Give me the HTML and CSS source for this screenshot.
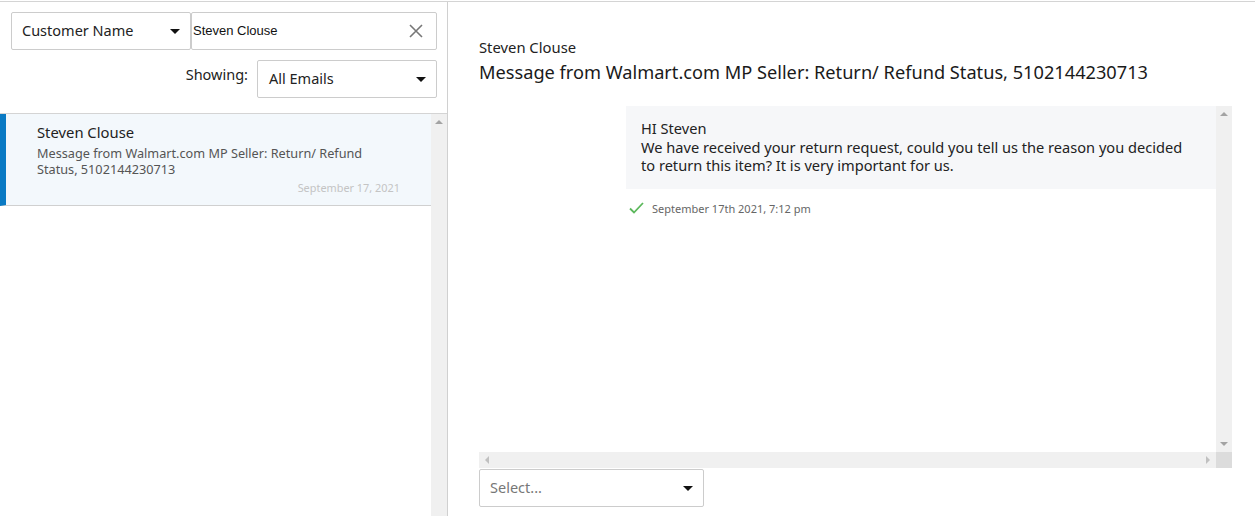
FILE: index.html
```html
<!DOCTYPE html>
<html>
<head>
<meta charset="utf-8">
<link rel="stylesheet" href="styles.css">
</head>
<body>
<div class="app">
  <aside class="left">
    <div class="filters">
      <div class="search-row">
        <div class="select sel-type"><span>Customer Name</span><span class="caret"></span></div>
        <div class="search"><span>Steven Clouse</span>
          <svg class="clear" width="14" height="14" viewBox="0 0 14 14"><path d="M1 1L13 13M13 1L1 13" stroke="#777" stroke-width="1.6" fill="none"/></svg>
        </div>
      </div>
      <div class="show-row">
        <span class="show-label">Showing:</span>
        <div class="select sel-show"><span>All Emails</span><span class="caret"></span></div>
      </div>
    </div>
    <div class="list-wrap">
      <div class="list">
        <div class="item active">
          <div class="item-name">Steven Clouse</div>
          <div class="item-subject">Message from Walmart.com MP Seller: Return/ Refund Status, 5102144230713</div>
          <div class="item-date">September 17, 2021</div>
        </div>
      </div>
      <div class="vscroll"><span class="arr-up"></span></div>
    </div>
  </aside>
  <main class="right">
    <div class="from">Steven Clouse</div>
    <div class="subject">Message from Walmart.com MP Seller: Return/ Refund Status, 5102144230713</div>
    <div class="thread">
      <div class="thread-main">
        <div class="thread-content">
          <div class="bubble">
            <div>HI Steven</div>
            <div>We have received your return request, could you tell us the reason you decided to return this item? It is very important for us.</div>
          </div>
          <div class="meta">
            <svg class="check" width="15" height="12" viewBox="0 0 15 12"><path d="M1 6.5L5 10.5L14 1" stroke="#5cb85c" stroke-width="1.8" fill="none"/></svg>
            <span>September 17th 2021, 7:12 pm</span>
          </div>
        </div>
        <div class="vscroll tall"><span class="arr-up"></span><span class="arr-down"></span></div>
      </div>
      <div class="hscroll">
        <div class="htrack"><span class="arr-left"></span><span class="arr-right"></span></div>
        <div class="corner"></div>
      </div>
    </div>
    <div class="select reply-select"><span class="placeholder">Select...</span><span class="caret"></span></div>
  </main>
</div>
</body>
</html>
```

FILE: styles.css
```css
* { box-sizing: border-box; }
html, body { margin: 0; padding: 0; background: #fff; }
body {
  font-family: "Noto Sans", "Open Sans", sans-serif;
  color: #222;
}
.app {
  margin-top: 1px;
  border-top: 1px solid #d4d4d4;
  height: 515px;
  display: flex;
}
.left {
  width: 448px;
  border-right: 1px solid #d0d0d0;
  display: flex;
  flex-direction: column;
}
.filters {
  padding: 10px 10px 15px 11px;
  display: flex;
  flex-direction: column;
  gap: 10px;
}
.search-row { display: flex; }
.select {
  height: 38px;
  border: 1px solid #ccc;
  border-radius: 2px;
  display: flex;
  align-items: center;
  justify-content: space-between;
  padding: 0 10px 2px 10px;
  font-size: 14.5px;
  color: #222;
  background: #fff;
}
.caret {
  width: 0; height: 0;
  border-left: 5px solid transparent;
  border-right: 5px solid transparent;
  border-top: 5px solid #111;
  margin-top: 2px;
}
.sel-type { width: 180px; }
.search {
  width: 246px;
  height: 38px;
  border: 1px solid #ccc;
  border-radius: 2px;
  display: flex;
  align-items: center;
  justify-content: space-between;
  padding: 0 13px 2px 1px;
  font-family: "Liberation Sans", Arial, sans-serif;
  font-size: 13px;
  color: #111;
}
.clear { margin-top: 2px; }
.show-row {
  display: flex;
  justify-content: flex-end;
  align-items: flex-start;
  gap: 9px;
}
.show-label {
  font-size: 14.5px;
  padding-top: 4px;
  color: #222;
}
.sel-show { width: 180px; padding-left: 11px; }
.list-wrap {
  flex: 1;
  display: flex;
  border-top: 1px solid #d4d4d4;
}
.list { flex: 1; }
.item {
  height: 92px;
  border-bottom: 1px solid #d0d0d0;
  padding: 7px 31px 0 31px;
  display: flex;
  flex-direction: column;
}
.item.active {
  background: #f3f8fc;
  border-left: 6px solid #0a7ac4;
}
.item-name { font-size: 14.8px; line-height: 22px; color: #222; }
.item-subject { font-size: 12.7px; line-height: 16px; color: #555; margin-top: 2px; }
.item-date {
  font-size: 10.9px;
  color: #c4c4c4;
  text-align: right;
  margin-top: 3px;
}
.vscroll {
  width: 16px;
  background: #f0f0f0;
  display: flex;
  flex-direction: column;
  align-items: center;
  justify-content: space-between;
  padding: 6px 0;
}
.arr-up {
  width: 0; height: 0;
  border-left: 4px solid transparent;
  border-right: 4px solid transparent;
  border-bottom: 4px solid #a3a3a3;
}
.arr-down {
  width: 0; height: 0;
  border-left: 4px solid transparent;
  border-right: 4px solid transparent;
  border-top: 4px solid #a3a3a3;
}
.right {
  flex: 1;
  padding: 35px 23px 0 31px;
  display: flex;
  flex-direction: column;
}
.from { font-size: 14.8px; line-height: 20px; color: #222; }
.subject { font-size: 18.2px; line-height: 26px; color: #1a1a1a; margin-top: 2px; }
.thread {
  margin-top: 21px;
  height: 362px;
  display: flex;
  flex-direction: column;
}
.thread-main { flex: 1; display: flex; }
.thread-content { flex: 1; padding-left: 147px; }
.bubble {
  background: #f6f7f9;
  padding: 13px 23px 14px 15px;
  font-size: 14.6px;
  line-height: 18.5px;
  color: #222;
}
.meta {
  display: flex;
  align-items: center;
  gap: 8px;
  padding: 12px 0 0 3px;
  font-size: 11px;
  color: #666;
}
.hscroll { height: 16px; display: flex; }
.htrack {
  flex: 1;
  background: #f0f0f0;
  display: flex;
  align-items: center;
  justify-content: space-between;
  padding: 0 6px;
}
.arr-left {
  width: 0; height: 0;
  border-top: 4px solid transparent;
  border-bottom: 4px solid transparent;
  border-right: 4px solid #c0c0c0;
}
.arr-right {
  width: 0; height: 0;
  border-top: 4px solid transparent;
  border-bottom: 4px solid transparent;
  border-left: 4px solid #c0c0c0;
}
.corner { width: 16px; background: #dcdcdc; }
.reply-select {
  width: 225px;
  margin-top: 1px;
}
.placeholder { color: #777; }
```
